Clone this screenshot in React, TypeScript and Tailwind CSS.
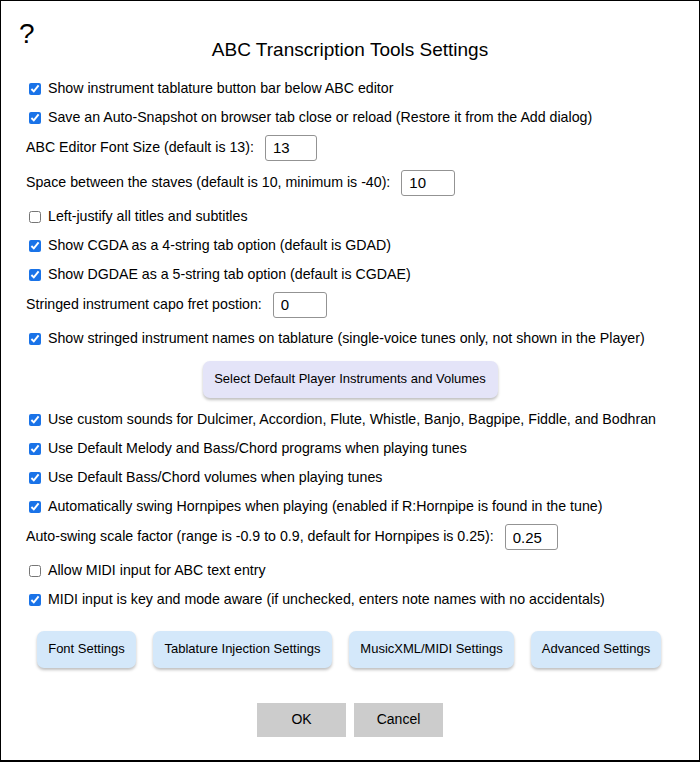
import React from 'react';

const font = { fontFamily: '"Liberation Sans", Arial, sans-serif' };

function Check({ checked, label }: { checked: boolean; label: string }) {
  return (
    <label className="flex items-center h-[29px] pl-[28px]">
      <input
        type="checkbox"
        defaultChecked={checked}
        className="w-[12px] h-[12px] m-0 accent-[#1a73e8]"
      />
      <span className="ml-[7px]">{label}</span>
    </label>
  );
}

function NumField({ label, value, width }: { label: string; value: string; width: string }) {
  return (
    <div className="h-[35px] pt-[2.5px] pl-[25px]">
      <div className="flex items-center h-[26px]">
        <span>{label}</span>
        <input
          type="text"
          defaultValue={value}
          className={`ml-[11px] h-[26px] px-[7px] border border-[#939393] rounded-[3px] text-[15px] text-black outline-none ${width}`}
          style={font}
        />
      </div>
    </div>
  );
}

function BlueButton({ children, w }: { children: React.ReactNode; w: string }) {
  return (
    <button
      className={`h-[37px] rounded-[7px] bg-[#d4e8fa] text-[13px] text-black shadow-[0_2px_3px_rgba(0,0,0,0.25)] ${w}`}
      style={font}
    >
      {children}
    </button>
  );
}

export default function App() {
  return (
    <div
      className="w-[700px] h-[762px] bg-white border border-black border-b-2 text-[14.2px] text-black flex flex-col"
      style={font}
    >
      <div className="pl-[18px] pt-[19px] h-[39px] text-[28px] leading-none">?</div>
      <div className="h-[34px] text-center text-[19px] leading-[20px]">ABC Transcription Tools Settings</div>
      <Check checked label="Show instrument tablature button bar below ABC editor" />
      <Check checked label="Save an Auto-Snapshot on browser tab close or reload (Restore it from the Add dialog)" />
      <NumField label="ABC Editor Font Size (default is 13):" value="13" width="w-[52px]" />
      <NumField label="Space between the staves (default is 10, minimum is -40):" value="10" width="w-[54px]" />
      <Check checked={false} label="Left-justify all titles and subtitles" />
      <Check checked label="Show CGDA as a 4-string tab option (default is GDAD)" />
      <Check checked label="Show DGDAE as a 5-string tab option (default is CGDAE)" />
      <NumField label="Stringed instrument capo fret postion:" value="0" width="w-[54px]" />
      <Check checked label="Show stringed instrument names on tablature (single-voice tunes only, not shown in the Player)" />
      <div className="flex justify-center pt-[7.5px] pb-[8px]">
        <button
          className="w-[295px] h-[37px] rounded-[7px] bg-[#e4e4f8] text-[13px] text-black shadow-[0_2px_3px_rgba(0,0,0,0.25)]"
          style={font}
        >
          Select Default Player Instruments and Volumes
        </button>
      </div>
      <Check checked label="Use custom sounds for Dulcimer, Accordion, Flute, Whistle, Banjo, Bagpipe, Fiddle, and Bodhran" />
      <Check checked label="Use Default Melody and Bass/Chord programs when playing tunes" />
      <Check checked label="Use Default Bass/Chord volumes when playing tunes" />
      <Check checked label="Automatically swing Hornpipes when playing (enabled if R:Hornpipe is found in the tune)" />
      <NumField label="Auto-swing scale factor (range is -0.9 to 0.9, default for Hornpipes is 0.25):" value="0.25" width="w-[53px]" />
      <Check checked={false} label="Allow MIDI input for ABC text entry" />
      <Check checked label="MIDI input is key and mode aware (if unchecked, enters note names with no accidentals)" />
      <div className="flex pl-[36px] gap-[17px] pt-[16px]">
        <BlueButton w="w-[99px]">Font Settings</BlueButton>
        <BlueButton w="w-[179px]">Tablature Injection Settings</BlueButton>
        <BlueButton w="w-[165px]">MusicXML/MIDI Settings</BlueButton>
        <BlueButton w="w-[130px]">Advanced Settings</BlueButton>
      </div>
      <div className="flex justify-center gap-[8px] pt-[35px]">
        <button className="w-[89px] h-[34px] bg-[#cccccc] text-[14px] text-black" style={font}>OK</button>
        <button className="w-[89px] h-[34px] bg-[#cccccc] text-[14px] text-black" style={font}>Cancel</button>
      </div>
    </div>
  );
}
